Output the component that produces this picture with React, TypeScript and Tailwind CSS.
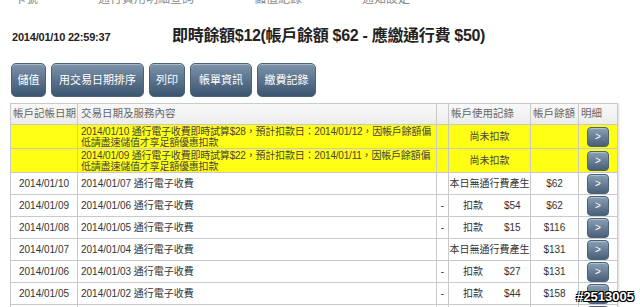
import React from "react";

type Row = {
  post: string;
  desc: string;
  dash: boolean;
  usage: string;
  amount?: string;
  balance: string;
};

const rows: Row[] = [
  { post: "2014/01/10", desc: "2014/01/07 通行電子收費", dash: false, usage: "本日無通行費產生", balance: "$62" },
  { post: "2014/01/09", desc: "2014/01/06 通行電子收費", dash: true, usage: "扣款", amount: "$54", balance: "$62" },
  { post: "2014/01/08", desc: "2014/01/05 通行電子收費", dash: true, usage: "扣款", amount: "$15", balance: "$116" },
  { post: "2014/01/07", desc: "2014/01/04 通行電子收費", dash: false, usage: "本日無通行費產生", balance: "$131" },
  { post: "2014/01/06", desc: "2014/01/03 通行電子收費", dash: true, usage: "扣款", amount: "$27", balance: "$131" },
  { post: "2014/01/05", desc: "2014/01/02 通行電子收費", dash: true, usage: "扣款", amount: "$44", balance: "$158" },
  { post: "2014/01/04", desc: "2014/01/01 通行電子收費", dash: true, usage: "扣款", amount: "$30", balance: "$202" },
];

const pending = [
  { line1: "2014/01/10 通行電子收費即時試算$28，預計扣款日：2014/01/12，因帳戶餘額偏", line2: "低請盡速儲值才享足額優惠扣款" },
  { line1: "2014/01/09 通行電子收費即時試算$22，預計扣款日：2014/01/11，因帳戶餘額偏", line2: "低請盡速儲值才享足額優惠扣款" },
];

function SlateButton({ children, className }: { children: React.ReactNode; className: string }) {
  return (
    <button
      className={`h-[34px] rounded-[5px] border border-[#4b6279] bg-gradient-to-b from-[#7d94ab] via-[#5b738c] to-[#3d566f] text-white text-[11px] whitespace-nowrap shadow-[inset_0_1px_0_rgba(255,255,255,0.35)] ${className}`}
    >
      {children}
    </button>
  );
}

function DetailButton() {
  return (
    <button className="w-[22px] h-[20px] rounded-[4px] border border-[#4b6279] bg-gradient-to-b from-[#8aa0b6] to-[#475f78] text-white text-[10px] leading-none shadow-[inset_0_1px_0_rgba(255,255,255,0.35)]">
      &gt;
    </button>
  );
}

export default function App() {
  const cell = "border border-[#c9c9c9]";
  return (
    <div
      className="relative w-[640px] h-[307px] overflow-hidden bg-white text-[#333]"
      style={{ fontFamily: '"Liberation Sans", "Noto Sans CJK TC", sans-serif' }}
    >
      {/* cut-off line at the very top */}
      <div className="h-[4px] overflow-hidden">
        <div className="-mt-[10px] flex gap-[60px] pl-[14px] text-[12px] text-[#888] whitespace-nowrap">
          <span>卡號</span>
          <span>通行費用明細查詢</span>
          <span>儲值紀錄</span>
          <span>通知設定</span>
        </div>
      </div>

      {/* title */}
      <div className="flex items-end h-[44px] pl-[12px]">
        <span className="text-[11px] font-bold text-[#222] w-[160px] pb-[3px] tracking-[-0.2px]">2014/01/10 22:59:37</span>
        <span className="text-[16px] font-bold text-[#222] tracking-[-0.3px]">即時餘額$12(帳戶餘額 $62 - 應繳通行費 $50)</span>
      </div>

      {/* buttons */}
      <div className="flex gap-[5px] pl-[11px] mt-[15px]">
        <SlateButton className="w-[35px]">儲值</SlateButton>
        <SlateButton className="w-[93px]">用交易日期排序</SlateButton>
        <SlateButton className="w-[36px]">列印</SlateButton>
        <SlateButton className="w-[62px]">帳單資訊</SlateButton>
        <SlateButton className="w-[59px]">繳費記錄</SlateButton>
      </div>

      {/* table */}
      <table className="ml-[10px] mt-[6px] w-[607px] border-collapse table-fixed text-[10px] shadow-[1px_1px_2px_rgba(0,0,0,0.15)]">
        <colgroup>
          <col className="w-[67px]" />
          <col className="w-[359px]" />
          <col className="w-[12px]" />
          <col className="w-[82px]" />
          <col className="w-[48px]" />
          <col className="w-[39px]" />
        </colgroup>
        <thead>
          <tr className="h-[21px] bg-gradient-to-b from-[#f8f8f8] to-[#ececec] text-[#666] text-[10.5px]">
            <th className={`${cell} font-normal text-left pl-[2px] whitespace-nowrap`}>帳戶記帳日期</th>
            <th className={`${cell} font-normal text-left pl-[3px]`}>交易日期及服務內容</th>
            <th className={cell}></th>
            <th className={`${cell} font-normal text-left pl-[2px]`}>帳戶使用記錄</th>
            <th className={`${cell} font-normal text-left pl-[2px] whitespace-nowrap`}>帳戶餘額</th>
            <th className={`${cell} font-normal text-left pl-[2px]`}>明細</th>
          </tr>
        </thead>
        <tbody>
          {pending.map((p, i) => (
            <tr key={i} className="h-[24px] bg-[#ffff14]">
              <td className={cell}></td>
              <td className={`${cell} pl-[3px] leading-[11px] text-[#444] tracking-[-0.2px]`}>
                <div className="whitespace-nowrap">{p.line1}</div>
                <div>{p.line2}</div>
              </td>
              <td className={cell}></td>
              <td className={`${cell} text-center text-[#444]`}>尚未扣款</td>
              <td className={cell}></td>
              <td className={`${cell} align-middle`}>
                <div className="flex justify-center">
                  <DetailButton />
                </div>
              </td>
            </tr>
          ))}
          {rows.map((r, i) => (
            <tr key={i} className="h-[22px] bg-white">
              <td className={`${cell} text-center`}>{r.post}</td>
              <td className={`${cell} pl-[3px]`}>{r.desc}</td>
              <td className={`${cell} text-center`}>{r.dash ? "-" : ""}</td>
              <td className={cell}>
                {r.amount ? (
                  <div className="flex pl-[14px] gap-[21px]">
                    <span>{r.usage}</span>
                    <span>{r.amount}</span>
                  </div>
                ) : (
                  <div className="text-center whitespace-nowrap">{r.usage}</div>
                )}
              </td>
              <td className={`${cell} text-center`}>{r.balance}</td>
              <td className={`${cell} align-middle`}>
                <div className="flex justify-center">
                  <DetailButton />
                </div>
              </td>
            </tr>
          ))}
        </tbody>
      </table>

      {/* watermark */}
      <div
        className="absolute right-[6px] bottom-[4px] text-[13px] font-bold text-white leading-none"
        style={{ textShadow: "1px 1px 0 #000, -1px -1px 0 #000, 1px -1px 0 #000, -1px 1px 0 #000" }}
      >
        #2513005
      </div>
    </div>
  );
}
